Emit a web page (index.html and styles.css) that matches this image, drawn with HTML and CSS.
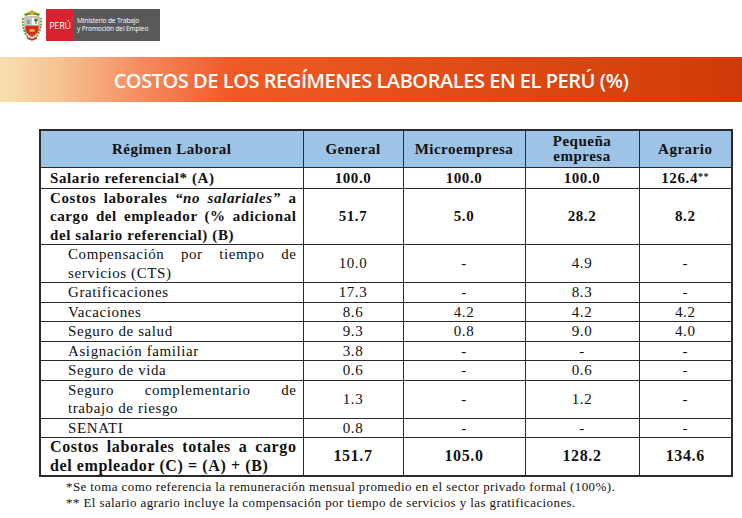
FILE: index.html
```html
<!DOCTYPE html>
<html lang="es">
<head>
<meta charset="utf-8">
<title>Costos de los regímenes laborales en el Perú</title>
<link rel="stylesheet" href="styles.css">
</head>
<body>
<header class="top">
  <div class="brand">
    <svg class="shield" viewBox="0 0 22 32" width="22" height="32" aria-hidden="true">
      <path d="M3 5 Q11 1 19 5 L18 7 Q11 4 4 7 Z" fill="#6b8e23"/>
      <path d="M8 3 L11 1 L14 3 L13 5 L9 5 Z" fill="#d9a520"/>
      <path d="M4 8 L18 8 L18 19 Q18 25 11 28 Q4 25 4 19 Z" fill="#fff" stroke="#8a6d1e" stroke-width="0.8"/>
      <rect x="4.4" y="8.4" width="6.6" height="8" fill="#a8d0e8"/>
      <path d="M6 15 L6 11 L8.5 10.5 L9 15" fill="#c98a3a"/>
      <path d="M15 10 L15 15" stroke="#3b7a2a" stroke-width="1"/>
      <circle cx="15" cy="11" r="1.8" fill="#3b7a2a"/>
      <path d="M4.4 16.4 L17.6 16.4 L17.6 19 Q17.6 24.6 11 27.4 Q4.4 24.6 4.4 19 Z" fill="#d52b1e"/>
      <path d="M8 21 Q11 19 14 21 L13 23 Q11 22 9 23 Z" fill="#f2c230"/>
      <path d="M2 9 Q1 20 6 27 Q9 30 11 30 Q13 30 16 27 Q21 20 20 9" fill="none" stroke="#5a8f2a" stroke-width="1.6" stroke-dasharray="2 1"/>
      <path d="M6 29 L11 31 L16 29" fill="none" stroke="#d52b1e" stroke-width="1.4"/>
    </svg>
    <div class="peru">PERÚ</div>
    <div class="ministry">Ministerio de Trabajo<br>y Promoción del Empleo</div>
  </div>
</header>
<div class="banner"><h1>COSTOS DE LOS REGÍMENES LABORALES EN EL PERÚ (%)</h1></div>
<main class="content">
  <table class="costs">
    <colgroup>
      <col class="c-label"><col class="c-gen"><col class="c-micro"><col class="c-peq"><col class="c-agr">
    </colgroup>
    <thead>
      <tr>
        <th>Régimen Laboral</th>
        <th>General</th>
        <th>Microempresa</th>
        <th class="two">Pequeña<br>empresa</th>
        <th>Agrario</th>
      </tr>
    </thead>
    <tbody>
      <tr class="strong">
        <td class="label">Salario referencial* (A)</td>
        <td>100.0</td><td>100.0</td><td>100.0</td><td>126.4<span class="ast">**</span></td>
      </tr>
      <tr class="strong">
        <td class="label"><span class="jl">Costos laborales <em>“no salariales”</em> a</span><span class="jl">cargo del empleador (% adicional</span><span class="ln">del salario referencial) (B)</span></td>
        <td>51.7</td><td>5.0</td><td>28.2</td><td>8.2</td>
      </tr>
      <tr>
        <td class="label sub"><span class="jl">Compensación por tiempo de</span><span class="ln">servicios (CTS)</span></td>
        <td>10.0</td><td>-</td><td>4.9</td><td>-</td>
      </tr>
      <tr>
        <td class="label sub">Gratificaciones</td>
        <td>17.3</td><td>-</td><td>8.3</td><td>-</td>
      </tr>
      <tr>
        <td class="label sub">Vacaciones</td>
        <td>8.6</td><td>4.2</td><td>4.2</td><td>4.2</td>
      </tr>
      <tr>
        <td class="label sub">Seguro de salud</td>
        <td>9.3</td><td>0.8</td><td>9.0</td><td>4.0</td>
      </tr>
      <tr>
        <td class="label sub">Asignación familiar</td>
        <td>3.8</td><td>-</td><td>-</td><td>-</td>
      </tr>
      <tr>
        <td class="label sub">Seguro de vida</td>
        <td>0.6</td><td>-</td><td>0.6</td><td>-</td>
      </tr>
      <tr>
        <td class="label sub"><span class="jl">Seguro complementario de</span><span class="ln">trabajo de riesgo</span></td>
        <td>1.3</td><td>-</td><td>1.2</td><td>-</td>
      </tr>
      <tr>
        <td class="label sub">SENATI</td>
        <td>0.8</td><td>-</td><td>-</td><td>-</td>
      </tr>
      <tr class="strong total">
        <td class="label"><span class="jl">Costos laborales totales a cargo</span><span class="ln">del empleador (C) = (A) + (B)</span></td>
        <td>151.7</td><td>105.0</td><td>128.2</td><td>134.6</td>
      </tr>
    </tbody>
  </table>
  <div class="notes">
    <p>*Se toma como referencia la remuneración mensual promedio en el sector privado formal (100%).</p>
    <p>** El salario agrario incluye la compensación por tiempo de servicios y las gratificaciones.</p>
  </div>
</main>
</body>
</html>
```
FILE: styles.css
```css
html, body {
  margin: 0;
  padding: 0;
  background: #ffffff;
}
body {
  width: 742px;
  height: 518px;
  overflow: hidden;
  font-family: "Liberation Serif", serif;
  color: #111;
}
.top {
  height: 57px;
  box-sizing: border-box;
  padding: 9px 0 0 21px;
}
.brand {
  display: flex;
  align-items: stretch;
  height: 32px;
}
.shield {
  display: block;
  margin-right: 3px;
}
.peru {
  background: #d7232f;
  color: #fff;
  font-family: "Open Sans", "Liberation Sans", sans-serif;
  font-size: 9px;
  width: 28px;
  display: flex;
  align-items: center;
  justify-content: center;
  letter-spacing: -0.2px;
}
.ministry {
  background: #59595b;
  color: #fff;
  font-family: "Open Sans", "Liberation Sans", sans-serif;
  font-size: 6.6px;
  line-height: 8px;
  width: 86px;
  box-sizing: border-box;
  padding: 8px 0 0 3px;
  letter-spacing: -0.15px;
}
.banner {
  height: 45px;
  background: linear-gradient(90deg, #f9e0b0 0px, #f7c191 60px, #f3875a 150px, #f05a26 230px, #e5501a 400px, #d8440e 600px, #d03a08 742px);
  display: flex;
  align-items: center;
  justify-content: center;
}
.banner h1 {
  margin: 0;
  color: #fff;
  font-family: "Open Sans", "Liberation Sans", sans-serif;
  font-weight: 600;
  font-size: 20px;
  letter-spacing: -0.45px;
  padding-top: 2px;
}
.content {
  padding: 27px 0 0 39px;
}
.costs {
  border-collapse: collapse;
  table-layout: fixed;
  width: 692px;
  border: 2px solid #2a2a2a;
  font-size: 15px;
  line-height: 18.5px;
  letter-spacing: 0.6px;
}
.c-label { width: 263px; }
.c-gen { width: 100px; }
.c-micro { width: 122px; }
.c-peq { width: 114px; }
.c-agr { width: 93px; }
.costs th, .costs td {
  border: 1px solid #2a2a2a;
  padding: 0;
  text-align: center;
  vertical-align: middle;
}
.costs th {
  background: #9dc3e6;
  font-weight: bold;
  height: 36px;
  line-height: 15px;
  letter-spacing: 0.5px;
}
.costs td.label {
  text-align: left;
  padding: 0 6px 0 9px;
}
.costs td.sub {
  padding-left: 27px;
}
.jl {
  display: block;
  text-align: justify;
  text-align-last: justify;
}
.ln {
  display: block;
}
.strong td {
  font-weight: bold;
}
.total td {
  font-size: 16px;
  line-height: 18.5px;
}
.ast {
  font-size: 10px;
  vertical-align: 3px;
}
.notes {
  padding: 2px 0 0 27px;
  font-size: 13px;
  line-height: 15.5px;
  letter-spacing: 0.4px;
}
.notes p {
  margin: 0;
}
```
